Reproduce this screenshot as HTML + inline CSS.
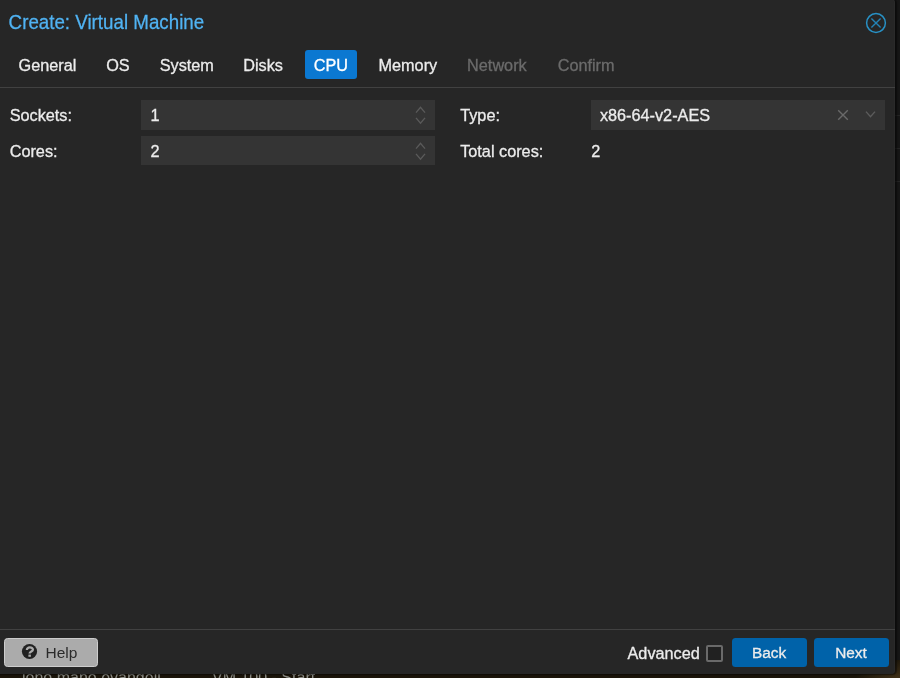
<!DOCTYPE html>
<html><head><meta charset="utf-8">
<style>
html,body{margin:0;padding:0;}
body{width:900px;height:678px;overflow:hidden;position:relative;background:#161616;font-family:"Liberation Sans",sans-serif;}
.bgline{position:absolute;left:880px;width:20px;height:1px;background:#242424;}
.bottom{position:absolute;left:0;top:660px;width:900px;height:18px;background:radial-gradient(ellipse 45px 22px at 900px 20px,#44341a,rgba(27,21,10,0)),#1b150a;overflow:hidden;will-change:transform;}
.bottom span{position:absolute;top:10px;font-size:16px;line-height:16px;color:#8e8e88;white-space:nowrap;}
.dlg{position:absolute;left:-6px;top:-1px;width:901px;height:674.5px;background:#262626;border-radius:4px;box-shadow:inset -1px 0 0 #2a2a2a,1px 0.5px 1.5px 0.5px rgba(0,0,0,0.5);overflow:hidden;will-change:transform;}
.in{position:absolute;left:6px;top:1px;width:900px;height:678px;}
.t{position:absolute;white-space:nowrap;font-size:16.25px;line-height:20px;color:#ececec;-webkit-text-stroke:0.3px currentColor;}
.title{position:absolute;left:8.6px;top:11px;font-size:18.75px;line-height:22px;color:#50b3f3;white-space:nowrap;-webkit-text-stroke:0.25px currentColor;transform:scaleY(1.06);transform-origin:0 0;}
.sep{position:absolute;left:0;width:900px;height:1px;background:#414141;}
.tab{position:absolute;top:50px;height:29px;border-radius:3px;}
.tab.active{background:#0b78d1;}
.fld{position:absolute;background:#343434;}
.btn{position:absolute;top:638px;height:29px;border-radius:3.5px;background:#0062a9;}
</style></head>
<body>
<div class="bgline" style="top:115px"></div>
<div class="bgline" style="top:148px"></div>
<div class="bgline" style="top:181px"></div>
<div class="bottom">
  <span style="left:22px">jono mano evangeli</span>
  <span style="left:212px">VM 100 - Start</span>
</div>
<div class="dlg"><div class="in">
  <div class="title">Create: Virtual Machine</div>
  <svg style="position:absolute;left:864px;top:11px" width="24" height="24" viewBox="0 0 24 24">
    <circle cx="12" cy="12" r="9.4" fill="none" stroke="#2890c4" stroke-width="1.5"/>
    <path d="M7.4 7.4 L16.6 16.6 M16.6 7.4 L7.4 16.6" stroke="#2382b5" stroke-width="1.4"/>
  </svg>

  <div class="tab active" style="left:305px;width:52px"></div>
  <div class="t" style="left:18.6px;top:55px">General</div>
  <div class="t" style="left:106.2px;top:55px">OS</div>
  <div class="t" style="left:159.7px;top:55px">System</div>
  <div class="t" style="left:243.2px;top:55px">Disks</div>
  <div class="t" style="left:313.8px;top:55px;color:#fff">CPU</div>
  <div class="t" style="left:378.5px;top:55px">Memory</div>
  <div class="t" style="left:467.1px;top:55px;color:#6b6b6b">Network</div>
  <div class="t" style="left:557.7px;top:55px;color:#6b6b6b">Confirm</div>
  <div class="sep" style="top:87px"></div>

  <div class="t" style="left:9.7px;top:105px">Sockets:</div>
  <div class="fld" style="left:141px;top:100px;width:294px;height:30px"></div>
  <div class="t" style="left:150.5px;top:105px">1</div>
  <svg style="position:absolute;left:412px;top:103px" width="16" height="24" viewBox="0 0 16 24">
    <path d="M4 9.6 L8.5 4.3 L13 9.6 M4 14.9 L8.5 20.2 L13 14.9" fill="none" stroke="#5a5a5a" stroke-width="1.35"/>
  </svg>
  <div class="t" style="left:9.7px;top:141px">Cores:</div>
  <div class="fld" style="left:141px;top:136px;width:294px;height:29px"></div>
  <div class="t" style="left:150.5px;top:141px">2</div>
  <svg style="position:absolute;left:412px;top:139px" width="16" height="24" viewBox="0 0 16 24">
    <path d="M4 9.6 L8.5 4.3 L13 9.6 M4 14.9 L8.5 20.2 L13 14.9" fill="none" stroke="#5a5a5a" stroke-width="1.35"/>
  </svg>

  <div class="t" style="left:460.2px;top:105px">Type:</div>
  <div class="fld" style="left:591px;top:100px;width:294px;height:30px"></div>
  <div class="t" style="left:599.9px;top:105px">x86-64-v2-AES</div>
  <svg style="position:absolute;left:835px;top:107px" width="16" height="16" viewBox="0 0 16 16">
    <path d="M3.2 3.2 L12.8 12.8 M12.8 3.2 L3.2 12.8" stroke="#696969" stroke-width="1.4"/>
  </svg>
  <svg style="position:absolute;left:862px;top:107px" width="16" height="16" viewBox="0 0 16 16">
    <path d="M4 4.6 L8.5 9.7 L13 4.6" fill="none" stroke="#5c5c5c" stroke-width="1.4"/>
  </svg>
  <div class="t" style="left:460.2px;top:141px">Total cores:</div>
  <div class="t" style="left:591.3px;top:141px">2</div>

  <div class="sep" style="top:629px"></div>

  <div style="position:absolute;left:4px;top:638px;width:92px;height:27px;border:1px solid #cdcdcd;border-radius:3.5px;background:#ababab;"></div>
  <svg style="position:absolute;left:21px;top:643px" width="17" height="17" viewBox="0 0 17 17">
    <circle cx="8.5" cy="8.5" r="7.6" fill="#222"/>
    <path d="M5.9 7 C5.6 3.6 12 3.6 11.9 6.7 C11.8 8.6 8.6 8.4 8.6 10.6" fill="none" stroke="#ababab" stroke-width="2.3"/>
    <rect x="7.4" y="11.6" width="2.5" height="2.2" fill="#ababab"/>
  </svg>
  <div class="t" style="left:45.5px;top:642.8px;color:#2a2a2a;font-size:15.5px;-webkit-text-stroke:0">Help</div>

  <div class="t" style="left:627.5px;top:643px">Advanced</div>
  <div style="position:absolute;left:706px;top:645px;width:13px;height:13px;border:2px solid #6a6a6a;border-radius:2px;background:#212121;"></div>

  <div class="btn" style="left:732px;width:75px"></div>
  <div class="t" style="left:752px;top:643px;font-size:15.4px">Back</div>
  <div class="btn" style="left:814px;width:75px"></div>
  <div class="t" style="left:835.2px;top:643px;font-size:15.4px">Next</div>
</div></div>
</body></html>
